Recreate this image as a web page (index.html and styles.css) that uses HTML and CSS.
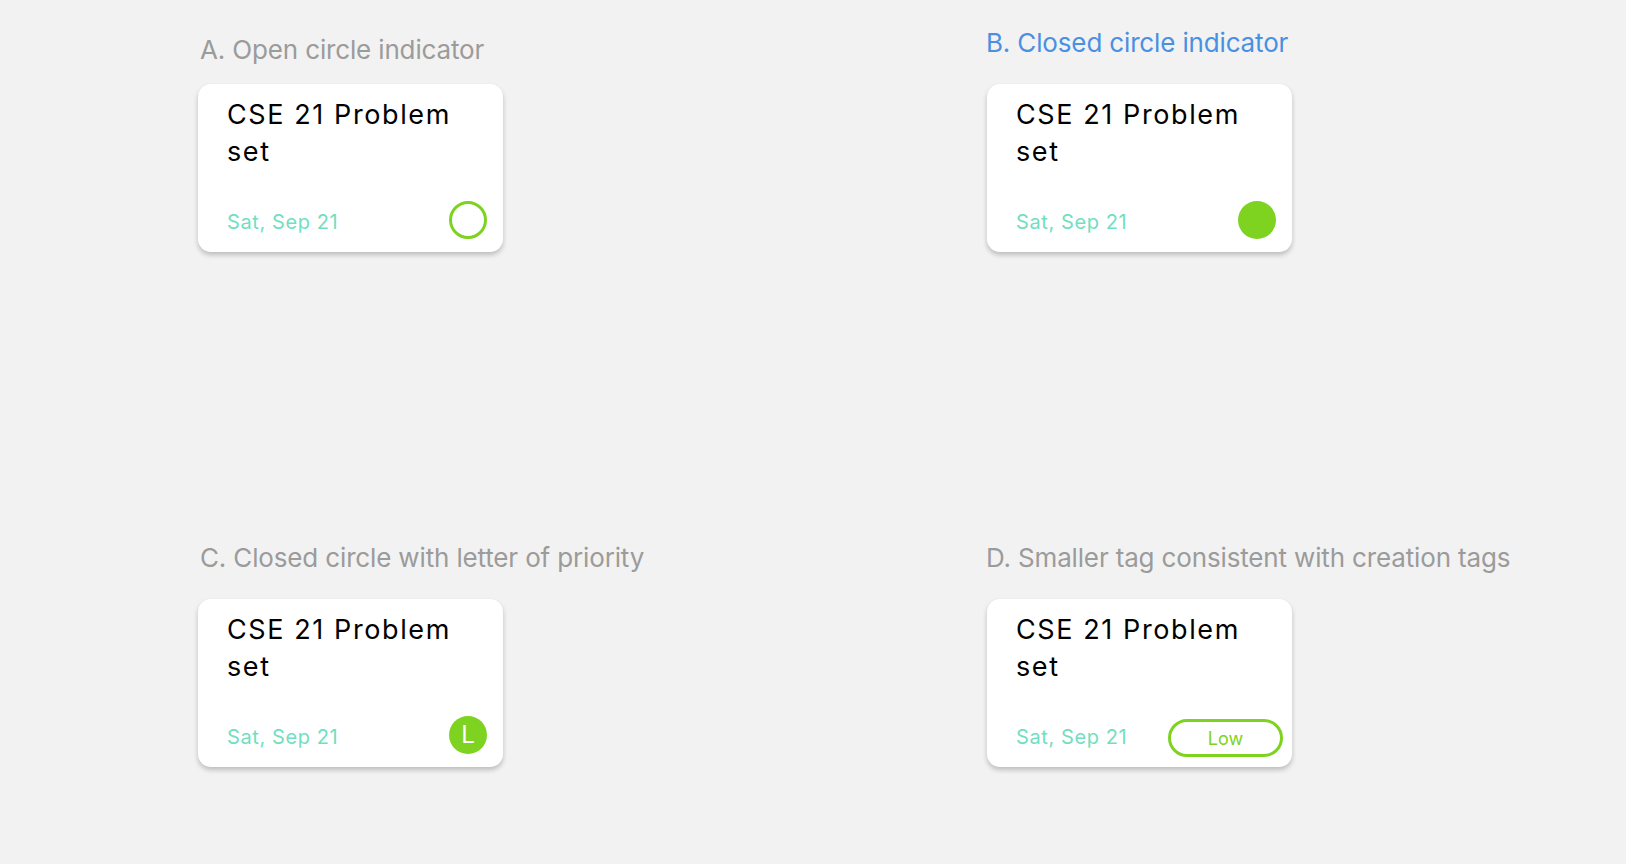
FILE: index.html
```html
<!DOCTYPE html>
<html lang="en">
<head>
<meta charset="utf-8">
<title>Priority indicators</title>
<link rel="stylesheet" href="styles.css">
</head>
<body>
<main class="board">
  <section class="option">
    <h2 class="option-label">A. Open circle indicator</h2>
    <div class="card">
      <div class="card-title">CSE 21 Problem set</div>
      <div class="card-footer">
        <span class="card-date">Sat, Sep 21</span>
        <span class="dot dot-open"></span>
      </div>
    </div>
  </section>
  <section class="option option-right">
    <h2 class="option-label option-label-active">B. Closed circle indicator</h2>
    <div class="card">
      <div class="card-title">CSE 21 Problem set</div>
      <div class="card-footer">
        <span class="card-date">Sat, Sep 21</span>
        <span class="dot dot-filled"></span>
      </div>
    </div>
  </section>
  <section class="option option-lower">
    <h2 class="option-label">C. Closed circle with letter of priority</h2>
    <div class="card">
      <div class="card-title">CSE 21 Problem set</div>
      <div class="card-footer">
        <span class="card-date">Sat, Sep 21</span>
        <span class="dot dot-filled dot-letter">L</span>
      </div>
    </div>
  </section>
  <section class="option option-lower option-right">
    <h2 class="option-label">D. Smaller tag consistent with creation tags</h2>
    <div class="card">
      <div class="card-title">CSE 21 Problem set</div>
      <div class="card-footer">
        <span class="card-date">Sat, Sep 21</span>
        <span class="tag">Low</span>
      </div>
    </div>
  </section>
</main>
</body>
</html>
```
FILE: styles.css
```css
html, body {
  margin: 0;
  padding: 0;
  background: #f2f2f2;
}

body {
  font-family: Inter, "Noto Sans", sans-serif;
  width: 1626px;
  height: 864px;
  overflow: hidden;
}

.board {
  display: grid;
  grid-template-columns: 789px 1fr;
  row-gap: 286px;
  padding: 30px 0 0 198px;
}

.option {
  display: flex;
  flex-direction: column;
}

.option-label {
  margin: 0 0 0 2px;
  height: 54px;
  font-size: 26px;
  font-weight: 400;
  line-height: 40px;
  color: #9b9b9b;
  letter-spacing: -0.15px;
}

.option-right .option-label {
  margin-left: -1px;
}

.option-lower .option-label {
  height: 61px;
}

.option-label-active {
  color: #4a90e2;
  margin-top: -7px;
  height: 61px;
}

.card {
  width: 305px;
  height: 168px;
  box-sizing: border-box;
  background: #ffffff;
  border-radius: 13px;
  box-shadow: 0 3px 5px rgba(0, 0, 0, 0.22);
  padding: 12px 16px 13px 29px;
  display: flex;
  flex-direction: column;
  justify-content: space-between;
}

.card-title {
  font-size: 27px;
  line-height: 37px;
  color: #000000;
  letter-spacing: 1.6px;
  width: 240px;
}

.card-footer {
  display: flex;
  align-items: center;
  justify-content: space-between;
  height: 38px;
}

.card-date {
  margin-top: 4px;
  font-size: 20px;
  color: #72dec0;
  letter-spacing: 0.6px;
}

.dot {
  width: 38px;
  height: 38px;
  box-sizing: border-box;
  border-radius: 50%;
  flex: none;
}

.dot-open {
  border: 3px solid #7ed321;
}

.dot-filled {
  background: #7ed321;
}

.dot-letter {
  display: flex;
  align-items: center;
  justify-content: center;
  color: #ffffff;
  font-size: 24px;
  line-height: 1;
}

.tag {
  width: 115px;
  height: 38px;
  margin: 6px -7px 0 0;
  box-sizing: border-box;
  border: 3px solid #7ed321;
  border-radius: 19px;
  display: flex;
  align-items: center;
  justify-content: center;
  color: #7ed321;
  font-size: 18px;
}
```
